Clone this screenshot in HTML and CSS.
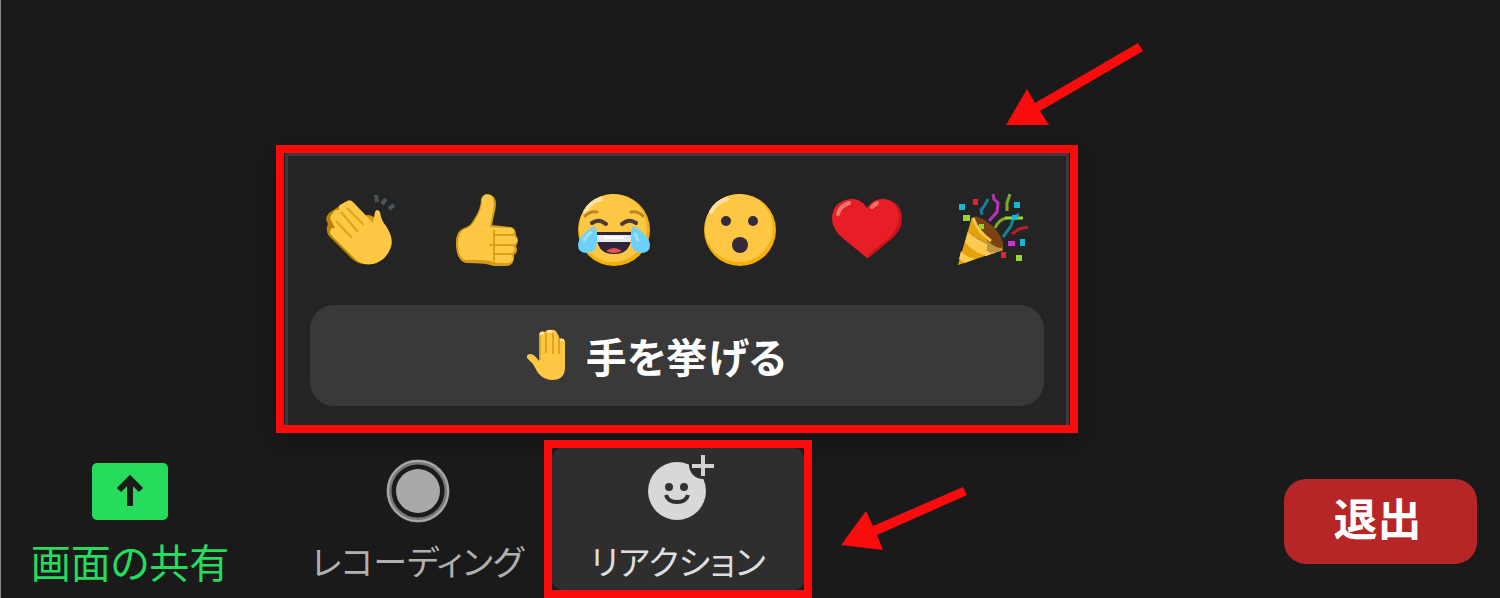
FILE: index.html
```html
<!DOCTYPE html>
<html lang="ja">
<head>
    <meta charset="UTF-8">
    <meta name="viewport" content="width=device-width, initial-scale=1.0">
    <title>リアクション</title>
    <link rel="stylesheet" href="styles.css">
</head>
<body>

    <main class="stage">
        <div class="highlight panel-frame">
            <div class="panel">
                <div class="emoji-row">
                    <button type="button" class="emoji" aria-label="拍手">
                        <svg viewBox="0 0 72 72">
                            <path fill="#b98300" d="M20 8 L4 19 Q-1 24 3 30 Q0 36 4 42 L26 64 Q36 73 46 69 L40 40 Z"/>
                            <path fill="#d39a12" d="M37 23 Q44 18 51 25 L50 38 L40 32 Z"/>
                            <path fill="#ffc844" d="M22 7 Q26 5 29 9 L48 29 Q49 24 50 18 Q52 14 55 18 Q56 26 61 32 Q69 44 66 53 Q61 67 48 70 Q37 72 29 64 L7 42 Q3 38 7 34 L10 34 L7 28 Q3 23 8 19 Q10 15 14 16 Q13 11 17 10 Z"/>
                            <path fill="none" stroke="#dfa21d" stroke-width="2" d="M22 14 L39 31 M16 18 L33 38 M11 27 L27 44"/>
                            <path fill="none" stroke="#49565e" stroke-width="4" d="M51 1 L52 8 M61 5 L57 10 M69 11 L64 15"/>
                        </svg>
                    </button>
                    <button type="button" class="emoji" aria-label="いいね">
                        <svg viewBox="0 0 72 72">
                            <path fill="#d29b19" d="M30 5 Q33 -2 40 1 Q47 4 44 17 L41 31 L60 33 Q65 34 65 41 Q69 47 65 52 Q68 58 63 61 Q64 71 56 72 L42 72 Q37 69 15 69 Q6 67 5 52 Q4 37 13 34 Q19 33 23 25 Q30 15 30 5 Z"/>
                            <path fill="#ffc844" d="M31 5 Q33 -1 39 1 Q44 4 42 16 L39 33 L60 34 Q65 36 62 40 L64 43 Q69 46 64 50 L62 52 Q66 56 61 59 L60 61 Q65 66 58 69 L46 69 Q37 65 14 66 Q7 63 7 50 Q7 38 14 35 Q20 34 25 25 Q31 15 31 5 Z"/>
                            <path fill="none" stroke="#dea01a" stroke-width="2" d="M43 36 V67 M42 41 H63 M38 51 H64 M42 60 H62"/>
                        </svg>
                    </button>
                    <button type="button" class="emoji" aria-label="うれし泣き">
                        <svg viewBox="0 0 72 72">
                            <circle cx="36" cy="36" r="36" fill="#f5af08"/>
                            <ellipse cx="35" cy="34" rx="34" ry="34" fill="#ffc844"/>
                            <path fill="none" stroke="#ffe0a0" stroke-width="4" stroke-linecap="round" d="M7 18 Q12 8 23 5"/>
                            <path fill="none" stroke="#b98722" stroke-width="3" stroke-linecap="round" d="M7 22 Q12 17 19 18 M53 18 Q60 17 65 22"/>
                            <path fill="none" stroke="#4c3833" stroke-width="4" stroke-linecap="round" d="M14 29 Q21 24 28 30 M44 30 Q51 24 58 29"/>
                            <path fill="#2f2439" d="M19 38 H53 Q55 60 36 60 Q17 60 19 38 Z"/>
                            <path fill="#e9e9eb" d="M19 41 H53 V48 H19 Z"/>
                            <path fill="#fff" d="M26 42 H46 V45 H26 Z"/>
                            <path fill="#df5552" d="M28 57 Q36 51 44 57 Q36 61 28 57 Z"/>
                            <path fill="#6dd1fb" d="M17 32 Q20 38 19 48 Q18 59 9 59 Q0 59 0 51 Q1 40 17 32 Z M55 32 Q71 40 72 51 Q72 59 63 59 Q54 59 53 48 Q52 38 55 32 Z"/>
                            <path fill="none" stroke="#9fe5ff" stroke-width="3" d="M14 38 Q8 41 6 47 M57 39 L60 47"/>
                        </svg>
                    </button>
                    <button type="button" class="emoji" aria-label="びっくり">
                        <svg viewBox="0 0 72 72">
                            <circle cx="36" cy="36" r="36" fill="#f5af08"/>
                            <ellipse cx="35" cy="34" rx="34" ry="34" fill="#ffc844"/>
                            <path fill="none" stroke="#ffe0a0" stroke-width="4" stroke-linecap="round" d="M7 18 Q12 8 23 5"/>
                            <ellipse cx="22" cy="27" rx="5" ry="5" fill="#35293a"/>
                            <ellipse cx="49" cy="27" rx="5" ry="5" fill="#35293a"/>
                            <ellipse cx="36" cy="51" rx="8" ry="8" fill="#35293a"/>
                        </svg>
                    </button>
                    <button type="button" class="emoji" aria-label="ハート">
                        <svg viewBox="0 0 72 72">
                            <path fill="#c3161c" d="M36 14 Q43 4 54 5 Q71 8 71 25 Q71 38 57 48 L36 65 Z"/>
                            <path fill="#e91d25" d="M36 14 Q30 4 19 5 Q1 8 1 25 Q1 36 14 46 L36 64 Q42 55 52 49 Q68 37 68 22 Q66 6 52 5 Q42 5 36 14 Z"/>
                            <path fill="none" stroke="#f4736b" stroke-width="4" stroke-linecap="round" d="M7 20 Q9 12 18 9 M41 13 L46 9"/>
                        </svg>
                    </button>
                    <button type="button" class="emoji" aria-label="お祝い">
                        <svg viewBox="0 0 72 72">
                            <path fill="#e5a20b" d="M15 23 L1 71 L46 56 Z"/>
                            <path fill="#ffca50" d="M10 42 Q23 53 40 58 L29 62 Q14 57 8 48 Z M4 57 Q9 63 18 65 L8 69 L2 65 Z"/>
                            <path fill="#bd9442" d="M11 37 Q27 50 46 52 L45 57 L34 59 Q20 53 10 42 Z"/>
                            <path fill="#ffca50" d="M11 38 Q20 46 30 50 L30 57 Q18 52 9 44 Z"/>
                            <path fill="#7a4310" d="M15 23 Q20 21 29 27 Q42 36 46 48 Q47 54 43 54 Q34 52 26 42 Q16 31 15 23 Z"/>
                            <path fill="none" stroke="#ffca50" stroke-width="3" d="M16 24 Q21 38 34 47"/>
                            <g fill="none" stroke-width="3">
                                <path stroke="#187f94" d="M31 5 L28 11 L24 16 L25 21 M62 20 Q56 23 54 32 L46 43"/>
                                <path stroke="#b532bd" d="M36 0 L37 5 L41 9 L40 18 L32 27"/>
                                <path stroke="#7fa62d" d="M53 0 L50 9 V17 M38 34 Q42 25 50 24"/>
                                <path stroke="#91d82f" d="M48 24 H66"/>
                                <path stroke="#b71f2b" d="M55 40 L62 35 L71 33"/>
                            </g>
                            <path fill="#16b5d2" d="M2 10 H8 V16 H2 Z M57 8 H63 V14 H57 Z M55 21 H61 V26 H55 Z M63 45 H68 V52 H63 Z"/>
                            <path fill="#e52230" d="M16 5 H21 V11 H16 Z M44 58 H49 V64 H44 Z"/>
                            <path fill="#91d82f" d="M6 21 H13 V27 H6 Z M22 30 H27 V35 H22 Z M59 61 H65 V67 H59 Z"/>
                            <path fill="#c735cf" d="M51 47 H58 V52 H51 Z"/>
                        </svg>
                    </button>
                </div>
                <button type="button" class="raise-hand">
                    <svg class="hand" viewBox="0 0 40 52">
                        <path fill="#ffc844" d="M13 5 Q15 1 19 3 Q21 0 25 1 Q29 0 31 4 Q33 6 33 10 Q37 8 39 12 V38 Q39 51 26 51 Q18 51 12 44 L7 35 L1 29 Q0 25 5 25 Q9 26 13 32 Z"/>
                        <path fill="none" stroke="#e2a31d" stroke-width="2" d="M14 6 V31 M20 4 V24 M27 4 V25 M33 9 V25"/>
                        <path fill="#ffe0a0" d="M14 3 H18 V6 H14 Z M22 1 H26 V4 H22 Z M34 10 H38 V12 H34 Z"/>
                    </svg>
                    <span>手を挙げる</span>
                </button>
            </div>
        </div>
        <svg class="arrow arrow-panel" viewBox="0 0 138 84" aria-hidden="true">
            <path d="M0 82 L21 46 L29 60 L132 0 L137 8 L34 68 L43 82 Z"/>
        </svg>
    </main>

    <footer class="toolbar">
        <button type="button" class="tool tool-share">
            <svg class="tool-icon" viewBox="0 0 76 66">
                <rect y="9" width="76" height="57" rx="5" fill="#25dc5c"/>
                <path fill="none" stroke="#1a1a1a" stroke-width="6" d="M38 52 V26 M27 36 L38 25 L49 36"/>
            </svg>
            <span>画面の共有</span>
        </button>
        <button type="button" class="tool tool-record">
            <svg class="tool-icon" viewBox="0 0 76 66">
                <circle cx="38" cy="37" r="29" fill="none" stroke="#777" stroke-width="5"/>
                <circle cx="38" cy="37" r="30" fill="none" stroke="#aaa" stroke-width="2"/>
                <circle cx="38" cy="37" r="22" fill="#a9a9a9"/>
            </svg>
            <span>レコーディング</span>
        </button>
        <div class="highlight reaction-frame">
            <button type="button" class="tool tool-reaction">
                <svg class="tool-icon" viewBox="0 0 76 66">
                    <circle cx="37" cy="37" r="29" fill="#d8d8d8"/>
                    <circle cx="63" cy="11" r="14" fill="#2e2e2e"/>
                    <path fill="none" stroke="#d2d2d2" stroke-width="4" d="M63 1 V22 M52 12 H74"/>
                    <ellipse cx="29" cy="33" rx="4" ry="4" fill="#333"/>
                    <ellipse cx="44" cy="33" rx="4" ry="4" fill="#333"/>
                    <path fill="none" stroke="#2e2e2e" stroke-width="4" d="M26 41 Q28 48 37 48 Q46 48 48 41"/>
                </svg>
                <span>リアクション</span>
            </button>
        </div>
        <button type="button" class="leave">退出</button>
        <svg class="arrow arrow-reaction" viewBox="0 0 127 64" aria-hidden="true">
            <path d="M0 58 L25 24 L32 39 L122 0 L126 8 L36 48 L42 63 Z"/>
        </svg>
    </footer>

</body>
</html>
```
FILE: styles.css
```css
* {
    box-sizing: border-box;
}
body {
    margin: 0;
    min-height: 100vh;
    display: flex;
    flex-direction: column;
    justify-content: flex-end;
    background-color: #1a1a1a;
    border-left: 1px solid #888;
    color: #fff;
    font-family: "Noto Sans CJK JP", sans-serif;
    font-feature-settings: "palt";
}
button {
    border: none;
    padding: 0;
    background: none;
    color: inherit;
    font-family: inherit;
    font-feature-settings: inherit;
    cursor: pointer;
}
svg {
    display: block;
    overflow: visible;
}
.stage {
    position: relative;
    padding-left: 275px;
}

/* Red call-out frames */
.highlight {
    border: 8px solid #fb0b0b;
}
.panel-frame {
    max-width: 802px;
    padding: 0 1px;
    background-color: #1a1a1a;
    box-shadow: 0 8px 24px rgba(0, 0, 0, 0.3);
}
.panel {
    padding: 38px 22px 19px;
    border: 3px solid #3b3b3b;
    border-bottom: none;
    background-color: #242424;
}
.emoji-row {
    display: flex;
    justify-content: space-between;
    padding: 0 15px;
    margin-bottom: 39px;
}
.emoji {
    width: 72px;
    height: 72px;
}
.emoji svg {
    width: 100%;
    height: 100%;
}
.raise-hand {
    display: flex;
    align-items: center;
    justify-content: center;
    gap: 20px;
    width: 100%;
    height: 101px;
    padding: 0 42px 2px 0;
    border-radius: 24px;
    background-color: #393939;
    font-size: 41px;
    font-weight: 700;
}
.hand {
    width: 40px;
    height: 52px;
}

/* Bottom toolbar */
.toolbar {
    position: relative;
    display: flex;
    align-items: flex-start;
    margin-top: 7px;
}
.tool {
    display: flex;
    flex-direction: column;
    align-items: center;
    gap: 14px;
    padding: 6px 0 2px;
    line-height: 54px;
    white-space: nowrap;
}
.tool-icon {
    width: 76px;
    height: 66px;
}
.tool-share {
    width: 258px;
    margin: 8px 32px 8px 0;
    color: #25dc5c;
    font-size: 40px;
}
.tool-record {
    width: 253px;
    margin: 8px 0;
    color: #b0b0b0;
    font-size: 34px;
}
.reaction-frame {
    width: 268px;
    background-color: #1a1a1a;
}
.tool-reaction {
    width: 100%;
    border-radius: 10px;
    background-color: #2e2e2e;
    color: #dedede;
    font-size: 34px;
}
.leave {
    width: 193px;
    height: 85px;
    margin: 39px 23px 0 auto;
    padding: 0 6px 10px 0;
    border-radius: 22px;
    background-color: #b72626;
    font-size: 44px;
    font-weight: 700;
}

/* Pointers drawn over the screen */
.arrow {
    position: absolute;
    fill: #fb0b0b;
}
.arrow-panel {
    top: -102px;
    left: 1005px;
    width: 138px;
    height: 84px;
}
.arrow-reaction {
    top: 47px;
    left: 840px;
    width: 127px;
    height: 64px;
}
```
